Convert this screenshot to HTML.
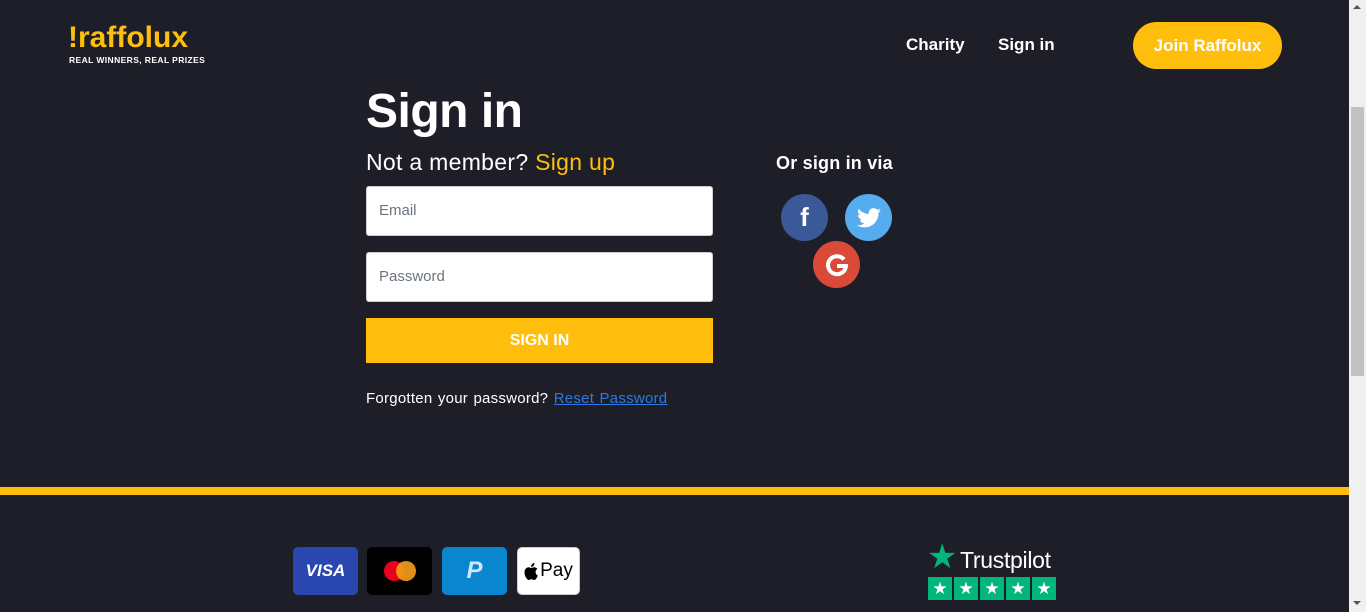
<!DOCTYPE html>
<html><head><meta charset="utf-8"><style>
*{margin:0;padding:0;box-sizing:border-box}
body{width:1366px;height:612px;overflow:hidden;background:#1e1e28;font-family:"Liberation Sans",sans-serif;color:#fff;position:relative}
.a{position:absolute}
.sb{left:1349px;top:0;width:17px;height:612px;background:#f0f0f0}
.th{left:1351px;top:107px;width:13px;height:269px;background:#c2c2c2}
.inp{left:366px;width:347px;height:50px;background:#fff;border:1px solid #ccc;border-radius:3px;color:#6c757d;font-size:15px;padding:15px 12px}
.ci{border-radius:50%;width:47px;height:47px;display:flex;align-items:center;justify-content:center;font-weight:bold;font-size:26px}
.card{top:547px;width:65px;height:48px;border-radius:5px;display:flex;align-items:center;justify-content:center}
.st{width:24px;height:23px;background:#00b67a;color:#fff;font-size:17px;text-align:center;line-height:23px}
</style></head><body>
<div class="a" style="left:68px;top:23px;color:#ffbe0b;font-weight:bold;font-size:30px;letter-spacing:0px;line-height:30px">!raffolux</div>
<div class="a" style="left:69px;top:55px;font-size:8.5px;font-weight:bold;letter-spacing:0.4px">REAL WINNERS, REAL PRIZES</div>
<div class="a" style="left:906px;top:35px;font-size:17px;font-weight:bold">Charity</div>
<div class="a" style="left:998px;top:35px;font-size:17px;font-weight:bold">Sign in</div>
<div class="a" style="left:1133px;top:22px;width:149px;height:47px;border-radius:24px;background:#ffbe0b;font-size:17px;font-weight:bold;text-align:center;line-height:47px">Join Raffolux</div>

<div class="a" style="left:366px;top:84px;font-size:48px;font-weight:bold;letter-spacing:-0.5px">Sign in</div>
<div class="a" style="left:366px;top:149px;font-size:23px;letter-spacing:0.3px">Not a member? <span style="color:#ffbe0b">Sign up</span></div>
<div class="a inp" style="top:186px">Email</div>
<div class="a inp" style="top:252px">Password</div>
<div class="a" style="left:366px;top:318px;width:347px;height:45px;background:#ffbe0b;font-size:16px;font-weight:bold;text-align:center;line-height:45px">SIGN IN</div>
<div class="a" style="left:366px;top:390px;font-size:15px;letter-spacing:0.25px;word-spacing:1px">Forgotten your password? <span style="color:#2a7ae2;text-decoration:underline">Reset Password</span></div>

<div class="a" style="left:776px;top:153px;font-size:18px;font-weight:bold;letter-spacing:0.2px">Or sign in via</div>
<div class="a ci" style="left:781px;top:194px;background:#3b5998">f</div>
<div class="a ci" style="left:845px;top:194px;background:#55acee"><svg width="24" height="20" viewBox="0 0 24 20"><path fill="#fff" d="M24 2.4a10 10 0 0 1-2.8.8A5 5 0 0 0 23.3.5a10 10 0 0 1-3.1 1.2A4.9 4.9 0 0 0 11.8 6 14 14 0 0 1 1.7.9a4.9 4.9 0 0 0 1.5 6.6A4.9 4.9 0 0 1 1 6.9a4.9 4.9 0 0 0 3.9 4.8 5 5 0 0 1-2.2.1 4.9 4.9 0 0 0 4.6 3.4A9.9 9.9 0 0 1 0 17.2 14 14 0 0 0 7.5 19.4c9.1 0 14-7.5 14-14v-.6A10 10 0 0 0 24 2.4z"/></svg></div>
<div class="a ci" style="left:813px;top:241px;background:#db4a39"><svg width="24" height="24" viewBox="0 0 24 24"><path fill="none" stroke="#fff" stroke-width="4" d="M19 6.5A9 9 0 1 0 21 13H12"/></svg></div>

<div class="a" style="left:0;top:487px;width:1349px;height:8px;background:#ffbe0b"></div>

<div class="a card" style="left:293px;background:#2a47b0;font-weight:bold;font-style:italic;font-size:17px">VISA</div>
<div class="a card" style="left:367px;background:#000"><svg width="36" height="22"><circle cx="12" cy="11" r="10" fill="#eb001b"/><circle cx="24" cy="11" r="10" fill="#f79e1b" opacity=".9"/></svg></div>
<div class="a card" style="left:442px;background:#0a86d0;font-weight:bold;font-style:italic;font-size:24px;color:#cde8ff">P</div>
<div class="a card" style="left:517px;width:63px;background:#fff;color:#000;font-size:19px;border:1px solid #ccc"><svg width="14" height="17" viewBox="0 0 14 17" style="margin-right:2px"><path fill="#000" d="M11.6 9c0-2.1 1.7-3 1.8-3.1-1-1.4-2.5-1.6-3-1.7-1.3-.1-2.5.8-3.1.8-.7 0-1.6-.8-2.7-.8C3.2 4.3 1.9 5.1 1.2 6.4c-1.5 2.6-.4 6.4 1 8.5.7 1 1.5 2.1 2.6 2.1 1 0 1.4-.7 2.700-.7s1.6.7 2.7.7 1.8-1 2.5-2.100c.8-1.200 1.1-2.300 1.1-2.400 0 0-2.2-.8-2.2-3.5zM9.600 2.700C10.200 2 10.600 1 10.500 0 9.600.1 8.600.6 8 1.300 7.400 1.900 6.900 2.900 7.100 3.900c1 .1 1.900-.5 2.500-1.200z"/></svg>Pay</div>

<div class="a" style="left:927px;top:540px;color:#00b67a;font-size:34px;line-height:34px">★</div>
<div class="a" style="left:960px;top:547px;font-size:23px;letter-spacing:-0.3px">Trustpilot</div>
<div class="a" style="left:928px;top:577px;display:flex;gap:2px"><div class="st">★</div><div class="st">★</div><div class="st">★</div><div class="st">★</div><div class="st">★</div></div>

<div class="a sb"></div><div class="a th"></div>
<div class="a" style="left:1353px;top:5px;width:0;height:0;border-left:4px solid transparent;border-right:4px solid transparent;border-bottom:4px solid #555"></div>
<div class="a" style="left:1353px;top:601px;width:0;height:0;border-left:4px solid transparent;border-right:4px solid transparent;border-top:4px solid #555"></div>
</body></html>
